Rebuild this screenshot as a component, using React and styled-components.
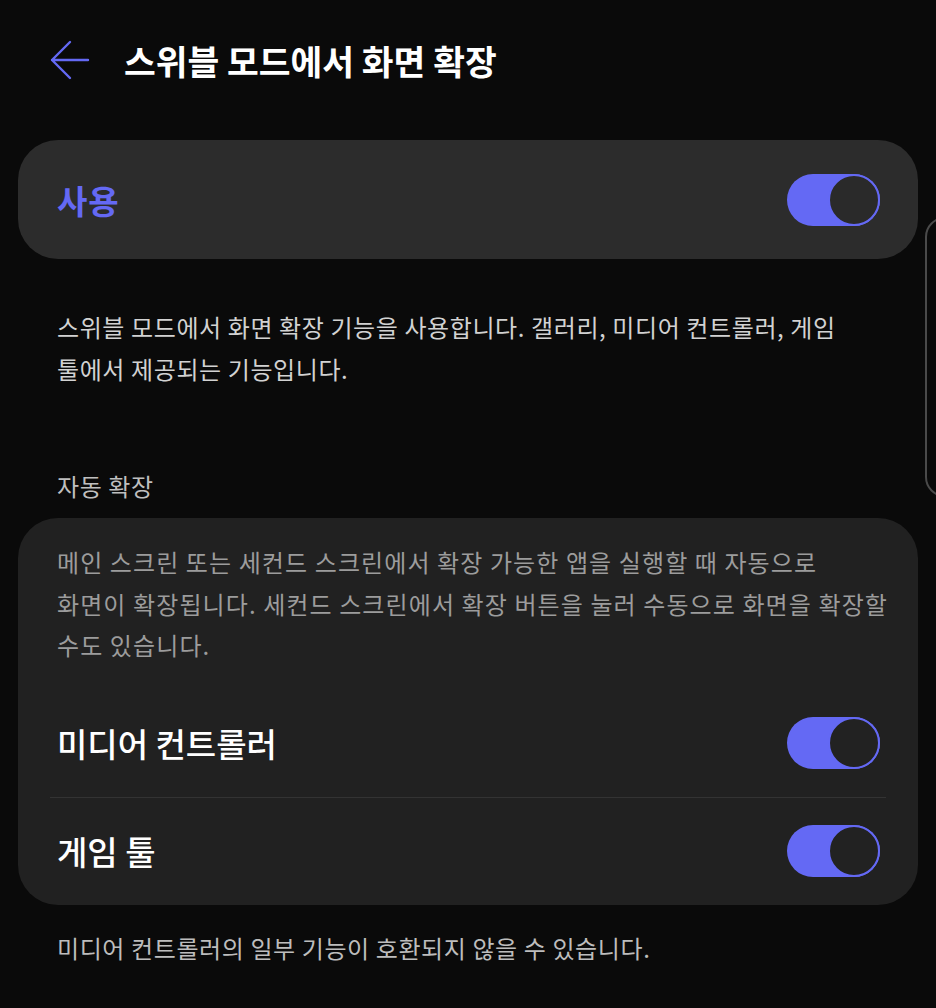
import React from 'react';
import styled, { createGlobalStyle } from 'styled-components';

const ACCENT = '#6469f4';

const GlobalStyle = createGlobalStyle`
  html, body {
    margin: 0;
    padding: 0;
    background: #0a0a0a;
    overflow: hidden;
  }
  body {
    font-family: 'Noto Sans CJK KR', 'Noto Sans', sans-serif;
    -webkit-font-smoothing: antialiased;
  }
`;

const Screen = styled.div`
  position: relative;
  width: 936px;
  height: 1008px;
  background: #0a0a0a;
  color: #fff;
  padding: 0 18px;
  box-sizing: border-box;
`;

const Header = styled.header`
  display: flex;
  align-items: center;
  gap: 34px;
  height: 120px;
  margin-bottom: 20px;
  padding: 0 0 0 32px;
`;

const BackButton = styled.button`
  display: flex;
  align-items: center;
  justify-content: center;
  width: 40px;
  height: 40px;
  padding: 0;
  border: none;
  background: none;
  cursor: pointer;
`;

const Title = styled.h1`
  margin: 0;
  font-size: 34.5px;
  font-weight: 700;
  letter-spacing: 0;
  color: #fff;
`;

const Card = styled.section`
  background: ${p => p.bg};
  border-radius: 40px;
  padding: ${p => p.pad};
`;

const Row = styled.div`
  display: flex;
  align-items: center;
  justify-content: space-between;
  height: ${p => p.h}px;
  padding: 0 38px 0 39px;
`;

const RowLabel = styled.span`
  font-size: 33px;
  font-weight: ${p => (p.accent ? 700 : 500)};
  letter-spacing: ${p => (p.accent ? '1px' : '0')};
  color: ${p => (p.accent ? ACCENT : '#fff')};
`;

const Divider = styled.div`
  height: 1px;
  margin: 0 32px;
  background: #333;
`;

const Toggle = styled.div`
  display: flex;
  justify-content: ${p => (p.on ? 'flex-end' : 'flex-start')};
  width: 93px;
  height: 52px;
  border-radius: 26px;
  background: ${ACCENT};
  box-sizing: border-box;
`;

const Knob = styled.div`
  width: 52px;
  height: 52px;
  border-radius: 50%;
  box-sizing: border-box;
  border: 2px solid ${ACCENT};
  background: ${p => p.fill};
`;

const Note = styled.p`
  margin: ${p => p.m};
  padding: 0 0 0 39px;
  font-size: 24px;
  line-height: 41.5px;
  letter-spacing: ${p => p.ls || '0.6px'};
  white-space: nowrap;
  color: ${p => p.color};
`;

const SectionLabel = styled.h2`
  margin: 0;
  padding: 0 0 0 39px;
  font-size: 24px;
  font-weight: 400;
  line-height: 30px;
  letter-spacing: 0.6px;
  color: #bfbfbf;
`;

const EdgeHandle = styled.div`
  position: absolute;
  left: 925px;
  top: 217px;
  width: 40px;
  height: 280px;
  border: 2px solid #4a4a4a;
  border-radius: 22px;
  box-sizing: border-box;
`;

const BackArrow = () => (
  <svg width="40" height="40" viewBox="0 0 40 40" fill="none">
    <path
      d="M38 20H2M20 2L2 20l18 18"
      stroke={ACCENT}
      strokeWidth="2.4"
      strokeLinecap="round"
      strokeLinejoin="round"
    />
  </svg>
);

const Switch = ({ on = true, fill }) => (
  <Toggle on={on}>
    <Knob fill={fill} />
  </Toggle>
);

export default function App() {
  return (
    <>
      <GlobalStyle />
      <Screen>
        <Header>
          <BackButton aria-label="뒤로">
            <BackArrow />
          </BackButton>
          <Title>스위블 모드에서 화면 확장</Title>
        </Header>

        <Card bg="#2c2c2c" pad="0">
          <Row h={119}>
            <RowLabel accent>사용</RowLabel>
            <Switch fill="#2a2a2a" />
          </Row>
        </Card>

        <Note m="47px 0 82px" color="#d2d2d2">
          스위블 모드에서 화면 확장 기능을 사용합니다. 갤러리, 미디어 컨트롤러, 게임
          <br />
          툴에서 제공되는 기능입니다.
        </Note>

        <SectionLabel>자동 확장</SectionLabel>

        <Card bg="#212121" pad="23px 0 0" style={{ marginTop: 17 }}>
          <Note m="0 0 23px" color="#9c9c9c" ls="1.1px">
            메인 스크린 또는 세컨드 스크린에서 확장 가능한 앱을 실행할 때 자동으로
            <br />
            화면이 확장됩니다. 세컨드 스크린에서 확장 버튼을 눌러 수동으로 화면을 확장할
            <br />
            수도 있습니다.
          </Note>
          <Row h={108}>
            <RowLabel>미디어 컨트롤러</RowLabel>
            <Switch fill="#222" />
          </Row>
          <Divider />
          <Row h={107}>
            <RowLabel>게임 툴</RowLabel>
            <Switch fill="#222" />
          </Row>
        </Card>

        <Note m="22px 0 0" color="#bdbdbd">
          미디어 컨트롤러의 일부 기능이 호환되지 않을 수 있습니다.
        </Note>

        <EdgeHandle />
      </Screen>
    </>
  );
}
